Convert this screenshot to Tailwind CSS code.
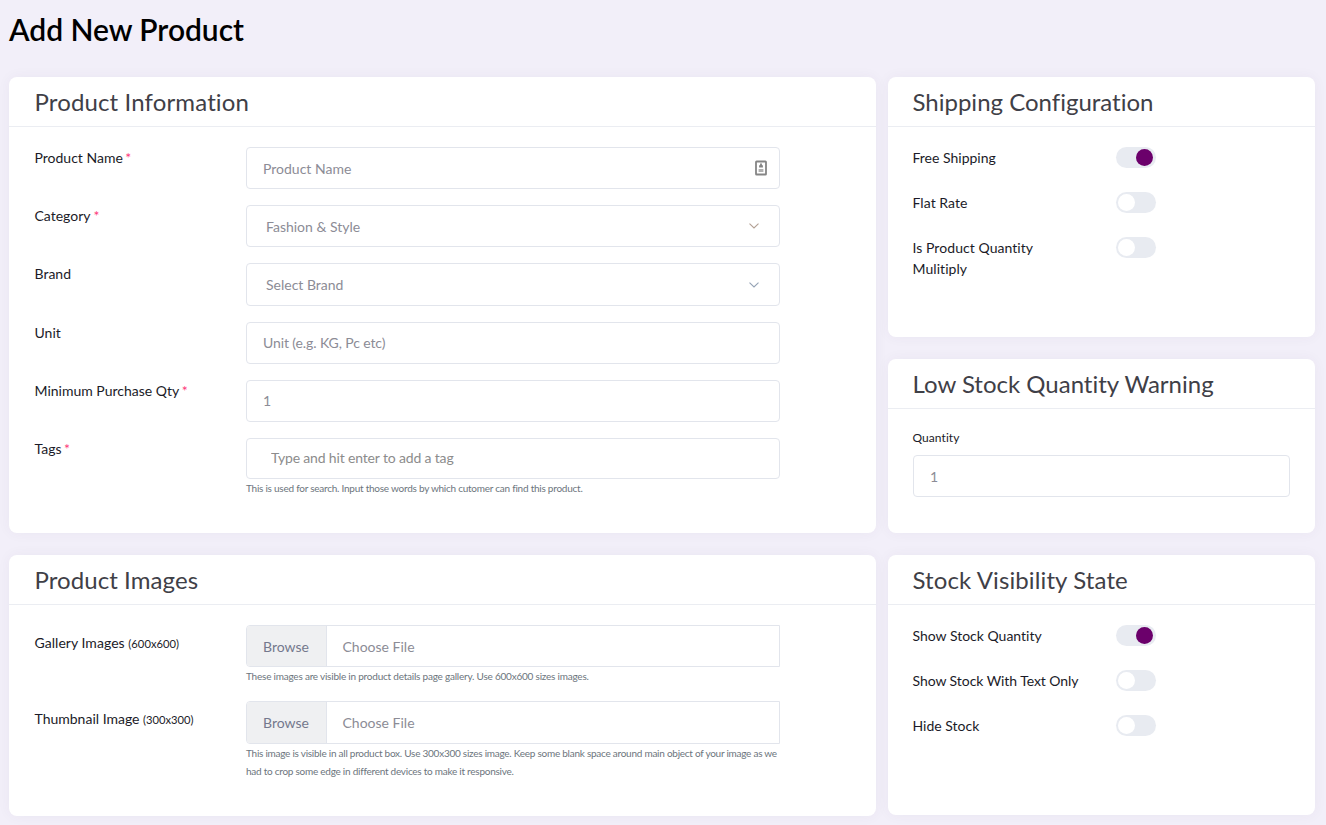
<!DOCTYPE html>
<html lang="en">
<head>
<meta charset="utf-8">
<title>Add New Product</title>
<script src="https://cdn.jsdelivr.net/npm/@tailwindcss/browser@4"></script>
</head>
<body class="h-[825px] overflow-hidden bg-[#f2eff9] font-['Lato',sans-serif] text-sm leading-[21px] text-[#1b1b28] [font-variant-ligatures:none]">
<h1 class="h-[77px] pt-[7px] pl-[9px] text-[30px] leading-[44px] font-semibold tracking-[-0.03px] text-black">Add New Product</h1>
<main class="flex gap-3 pl-[9px]">
  <div class="flex w-[867px] flex-col gap-[22px]">
    <section class="h-[456px] rounded-lg bg-white shadow-[0_0_13px_rgba(82,63,105,0.05)]">
      <h2 class="h-[50px] border-b border-[#ebedf2] pl-[25.5px] text-2xl leading-[49px] tracking-[0.13px] text-[#3f4047]">Product Information</h2>
      <div class="flex flex-col gap-[16.2px] pt-5 pl-[26px]">
        <div class="flex h-[42px]"><label class="-ml-[0.5px] w-[211.5px]">Product Name<span class="pl-[2.5px] text-[#fd397a]">*</span></label>
          <div class="flex w-[534px] items-center justify-between rounded border border-[#e2e5ec] pr-[12px] pl-4">
            <input class="flex-1 pt-px text-sm placeholder:text-[#8c8c96] outline-none" placeholder="Product Name">
            <svg class="mb-px h-4 w-3" viewBox="0 0 12 16"><rect x="1" y="1.5" width="10" height="13" rx=".6" fill="none" stroke="#858585" stroke-width="1.8"/><path d="M5.100 3.600h1.800v1.600h1v2.400H4.100V5.200h1z" fill="#858585"/><path d="M3.600 9h4.800v3H3.600z" fill="#b0b0b0"/></svg>
          </div></div>
        <div class="flex h-[42px]"><label class="-ml-[0.5px] w-[211.5px]">Category<span class="pl-[3px] text-[#fd397a]">*</span></label>
          <div class="flex w-[534px] items-center justify-between rounded border border-[#e2e5ec] pr-[20px] pl-[19px] text-[#8c8c96]">Fashion &amp; Style
            <svg class="h-[6px] w-[10px]" viewBox="0 0 10 6" fill="none" stroke="#b3a195" stroke-width="1.1"><path d="M.5.7 5 4.900 9.500.7"/></svg></div></div>
        <div class="flex h-[42.4px]"><label class="-ml-[0.5px] w-[211.5px]">Brand</label>
          <div class="flex w-[534px] items-center justify-between rounded border border-[#e2e5ec] pr-[20px] pl-[19px] text-[#8c8c96]">Select Brand
            <svg class="h-[6px] w-[10px]" viewBox="0 0 10 6" fill="none" stroke="#95a3b5" stroke-width="1.1"><path d="M.5.7 5 4.900 9.500.7"/></svg></div></div>
        <div class="flex h-[42px]"><label class="-ml-[0.5px] w-[211.5px]">Unit</label>
          <input class="w-[534px] rounded border border-[#e2e5ec] px-4 text-sm tracking-[-0.1px] placeholder:text-[#8c8c96]" placeholder="Unit (e.g. KG, Pc etc)"></div>
        <div class="flex h-[42px]"><label class="-ml-[0.5px] w-[211.5px]">Minimum Purchase Qty<span class="pl-[2.5px] text-[#fd397a]">*</span></label>
          <input class="w-[534px] rounded border border-[#e2e5ec] px-4 text-sm text-[#8c8c96]" value="1"></div>
        <div class="-mt-[0.4px] flex"><label class="-ml-[0.5px] w-[211.5px]">Tags<span class="pl-[2.5px] text-[#fd397a]">*</span></label>
          <div class="w-[534px]"><input class="block h-[41px] w-full rounded border border-[#e2e5ec] px-6 pb-px text-sm tracking-[-0.16px] placeholder:text-[#8c8c8c]" placeholder="Type and hit enter to add a tag">
          <p class="text-[10px] leading-[18px] tracking-[-0.245px] text-[#6c757d]">This is used for search. Input those words by which cutomer can find this product.</p></div></div>
      </div>
    </section>
    <section class="h-[261px] rounded-lg bg-white shadow-[0_0_13px_rgba(82,63,105,0.05)]">
      <h2 class="h-[50px] border-b border-[#ebedf2] pl-[25.5px] text-2xl leading-[49px] tracking-[0.07px] text-[#3f4047]">Product Images</h2>
      <div class="flex flex-col gap-4 pt-5 pl-[26px]">
        <div class="flex"><label class="-ml-[0.5px] w-[211.5px] pt-[7px] tracking-[0.04px]">Gallery Images <span class="text-[11.2px]">(600x600)</span></label>
          <div class="w-[534px]"><div class="flex h-[42px] items-stretch overflow-hidden rounded-l border border-[#e2e5ec] leading-[42px] text-[#8c8c96]"><span class="w-[80px] border-r border-[#e2e5ec] bg-[#eff0f2] pl-4 text-[#74788d]">Browse</span><span class="pl-[15.5px]">Choose File</span></div>
          <p class="text-[10px] leading-[18px] tracking-[-0.22px] text-[#6c757d]">These images are visible in product details page gallery. Use 600x600 sizes images.</p></div></div>
        <div class="flex"><label class="-ml-[0.5px] w-[211.5px] pt-[7px]">Thumbnail Image <span class="text-[11.2px]">(300x300)</span></label>
          <div class="w-[534px]"><div class="flex h-[43px] items-stretch overflow-hidden rounded-l border border-[#e2e5ec] leading-[42px] text-[#8c8c96]"><span class="w-[80px] border-r border-[#e2e5ec] bg-[#eff0f2] pl-4 text-[#74788d]">Browse</span><span class="pl-[15.5px]">Choose File</span></div>
          <p class="text-[10px] leading-[18px] tracking-[-0.254px] whitespace-nowrap text-[#6c757d]">This image is visible in all product box. Use 300x300 sizes image. Keep some blank space around main object of your image as we<br>had to crop some edge in different devices to make it responsive.</p></div></div>
      </div>
    </section>
  </div>
  <div class="flex w-[427px] flex-col gap-[22px]">
    <section class="h-[260px] rounded-lg bg-white shadow-[0_0_13px_rgba(82,63,105,0.05)]">
      <h2 class="h-[50px] border-b border-[#ebedf2] pl-[24.5px] text-2xl leading-[49px] text-[#3f4047]">Shipping Configuration</h2>
      <div class="flex flex-col gap-6 pt-5 pl-[24.5px]">
        <div class="flex h-[21px]"><div class="w-[203.5px]">Free Shipping</div><div class="flex h-[21px] w-10 items-center justify-end rounded-full bg-[#e8ebf1] px-[3px]"><i class="size-[17px] rounded-full bg-[#6b006b]"></i></div></div>
        <div class="flex h-[21px]"><div class="w-[203.5px] tracking-[0.06px]">Flat Rate</div><div class="flex h-[21px] w-10 items-center rounded-full bg-[#e8ebf1] px-[2px]"><i class="size-[17px] rounded-full bg-white"></i></div></div>
        <div class="flex h-[21px]"><div class="w-[203.5px] tracking-[0.06px]">Is Product Quantity<br>Mulitiply</div><div class="flex h-[21px] w-10 items-center rounded-full bg-[#e8ebf1] px-[2px]"><i class="size-[17px] rounded-full bg-white"></i></div></div>
      </div>
    </section>
    <section class="h-[174px] rounded-lg bg-white shadow-[0_0_13px_rgba(82,63,105,0.05)]">
      <h2 class="h-[50px] border-b border-[#ebedf2] pl-[24.5px] text-2xl leading-[49px] text-[#3f4047]">Low Stock Quantity Warning</h2>
      <div class="px-[25px] pt-5"><label class="-ml-[0.5px] block h-[26px] text-xs leading-[18px] tracking-[0.06px]">Quantity</label>
        <input class="block h-[42px] w-full rounded border border-[#e2e5ec] px-4 text-sm text-[#8c8c96]" value="1"></div>
    </section>
    <section class="h-[260px] rounded-lg bg-white shadow-[0_0_13px_rgba(82,63,105,0.05)]">
      <h2 class="h-[50px] border-b border-[#ebedf2] pl-[24.5px] text-2xl leading-[49px] tracking-[0.11px] text-[#3f4047]">Stock Visibility State</h2>
      <div class="flex flex-col gap-6 pt-5 pl-[24.5px]">
        <div class="flex h-[21px]"><div class="w-[203.5px]">Show Stock Quantity</div><div class="flex h-[21px] w-10 items-center justify-end rounded-full bg-[#e8ebf1] px-[3px]"><i class="size-[17px] rounded-full bg-[#6b006b]"></i></div></div>
        <div class="flex h-[21px]"><div class="w-[203.5px] tracking-[-0.06px]">Show Stock With Text Only</div><div class="flex h-[21px] w-10 items-center rounded-full bg-[#e8ebf1] px-[2px]"><i class="size-[17px] rounded-full bg-white"></i></div></div>
        <div class="flex h-[21px]"><div class="w-[203.5px]">Hide Stock</div><div class="flex h-[21px] w-10 items-center rounded-full bg-[#e8ebf1] px-[2px]"><i class="size-[17px] rounded-full bg-white"></i></div></div>
      </div>
    </section>
  </div>
</main>
</body>
</html>
